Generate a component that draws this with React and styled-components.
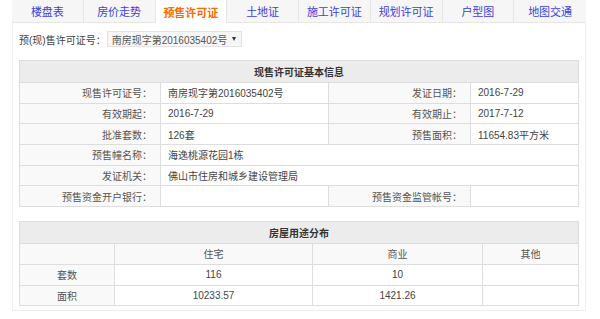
import React from 'react';
import styled, { createGlobalStyle } from 'styled-components';

const GlobalStyle = createGlobalStyle`
  body {
    margin: 0;
    background: #fff;
    font-family: "Liberation Sans", "Noto Sans CJK SC", sans-serif;
    font-size: 10px;
    color: #555;
  }
`;

const Panel = styled.div`
  margin-left: 12px;
  width: 574px;
  height: 311px;
  box-sizing: border-box;
  border: 1px solid #eee;
  border-top: none;
`;

const TabBar = styled.div`
  display: grid;
  grid-template-columns: repeat(8, 1fr);
  height: 23px;
  background: #f6f6f6;
  margin: 0 -1px;
`;

const Tab = styled.div`
  display: flex;
  align-items: center;
  justify-content: center;
  font-size: 11px;
  color: ${p => (p.$active ? '#ff6a00' : '#4040dc')};
  background: ${p => (p.$active ? '#fff' : 'transparent')};
  border-right: 1px solid #e6e6e6;
  border-bottom: ${p => (p.$active ? 'none' : '1px solid #e6e6e6')};
  font-weight: ${p => (p.$active ? 'bold' : 'normal')};
  &:last-child { border-right: none; }
`;

const Content = styled.div`
  padding: 8px 7px 0 6px;
`;

const SelectRow = styled.div`
  display: flex;
  align-items: center;
  height: 16px;
  color: #444;
`;

const Select = styled.div`
  margin-left: 1px;
  height: 14px;
  padding: 0 5px 0 4px;
  display: flex;
  align-items: center;
  gap: 5px;
  border: 1px solid #e2e2e2;
  background: #f6f6f6;
  color: #555;
`;

const Caret = styled.span`
  width: 0;
  height: 0;
  border-left: 2.5px solid transparent;
  border-right: 2.5px solid transparent;
  border-top: 4px solid #333;
`;

const Table = styled.table`
  width: 559px;
  border-collapse: collapse;
  margin-top: ${p => p.$gap}px;
  table-layout: fixed;
  color: #444;
`;

const HeadCell = styled.th`
  height: 21px;
  background: #ececec;
  border: 1px solid #ddd;
  font-weight: bold;
  color: #333;
  text-align: center;
  padding: 0;
`;

const Label = styled.td`
  height: 19.7px;
  border: 1px solid #ddd;
  background: #f9f9f9;
  text-align: ${p => p.$align || 'right'};
  padding: 0 8px;
  color: #555;
  white-space: nowrap;
`;

const Value = styled.td`
  height: 19.7px;
  border: 1px solid #ddd;
  background: #fff;
  text-align: ${p => p.$align || 'left'};
  padding: 0 7px;
  white-space: nowrap;
`;

const tabs = ['楼盘表', '房价走势', '预售许可证', '土地证', '施工许可证', '规划许可证', '户型图', '地图交通'];

export default function App() {
  return (
    <>
      <GlobalStyle />
      <Panel>
        <TabBar>
          {tabs.map((t, i) => (
            <Tab key={t} $active={i === 2}>{t}</Tab>
          ))}
        </TabBar>
        <Content>
          <SelectRow>
            预(现)售许可证号：
            <Select>南房现字第2016035402号<Caret /></Select>
          </SelectRow>
          <Table $gap={13}>
            <colgroup>
              <col style={{ width: 141 }} />
              <col style={{ width: 168 }} />
              <col style={{ width: 142 }} />
              <col style={{ width: 108 }} />
            </colgroup>
            <thead>
              <tr><HeadCell colSpan={4}>现售许可证基本信息</HeadCell></tr>
            </thead>
            <tbody>
              <tr>
                <Label>现售许可证号：</Label>
                <Value>南房现字第2016035402号</Value>
                <Label>发证日期：</Label>
                <Value>2016-7-29</Value>
              </tr>
              <tr>
                <Label>有效期起：</Label>
                <Value>2016-7-29</Value>
                <Label>有效期止：</Label>
                <Value>2017-7-12</Value>
              </tr>
              <tr>
                <Label>批准套数：</Label>
                <Value>126套</Value>
                <Label>预售面积：</Label>
                <Value>11654.83平方米</Value>
              </tr>
              <tr>
                <Label>预售幢名称：</Label>
                <Value colSpan={3}>海逸桃源花园1栋</Value>
              </tr>
              <tr>
                <Label>发证机关：</Label>
                <Value colSpan={3}>佛山市住房和城乡建设管理局</Value>
              </tr>
              <tr>
                <Label>预售资金开户银行：</Label>
                <Value></Value>
                <Label>预售资金监管帐号：</Label>
                <Value></Value>
              </tr>
            </tbody>
          </Table>
          <Table $gap={14}>
            <colgroup>
              <col style={{ width: 95 }} />
              <col style={{ width: 198 }} />
              <col style={{ width: 170 }} />
              <col style={{ width: 96 }} />
            </colgroup>
            <thead>
              <tr><HeadCell colSpan={4}>房屋用途分布</HeadCell></tr>
            </thead>
            <tbody>
              <tr>
                <Label $align="center"></Label>
                <Label $align="center">住宅</Label>
                <Label $align="center">商业</Label>
                <Label $align="center">其他</Label>
              </tr>
              <tr>
                <Label $align="center">套数</Label>
                <Value $align="center">116</Value>
                <Value $align="center">10</Value>
                <Value $align="center"></Value>
              </tr>
              <tr>
                <Label $align="center">面积</Label>
                <Value $align="center">10233.57</Value>
                <Value $align="center">1421.26</Value>
                <Value $align="center"></Value>
              </tr>
            </tbody>
          </Table>
        </Content>
      </Panel>
    </>
  );
}
